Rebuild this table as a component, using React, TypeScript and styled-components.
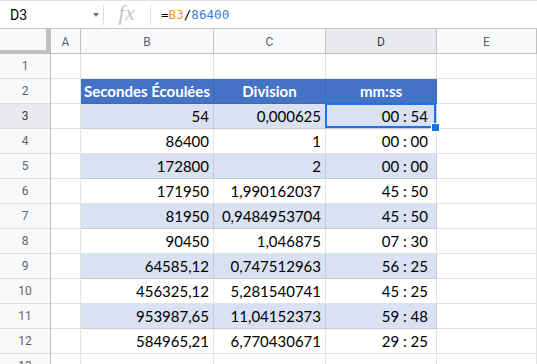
import React from "react";
import styled, { createGlobalStyle, css } from "styled-components";

const GlobalStyle = createGlobalStyle`
  html, body {
    margin: 0;
    padding: 0;
    background: #ffffff;
    overflow: hidden;
  }
`;

type Row = [string, string, string];

const rows: Row[] = [
  ["54", "0,000625", "00 : 54"],
  ["86400", "1", "00 : 00"],
  ["172800", "2", "00 : 00"],
  ["171950", "1,990162037", "45 : 50"],
  ["81950", "0,9484953704", "45 : 50"],
  ["90450", "1,046875", "07 : 30"],
  ["64585,12", "0,747512963", "56 : 25"],
  ["456325,12", "5,281540741", "45 : 25"],
  ["953987,65", "11,04152373", "59 : 48"],
  ["584965,21", "6,770430671", "29 : 25"]
];

const columns = ["A", "B", "C", "D", "E"];

const App: React.FC = () => {
  return (
    <Page>
      <GlobalStyle />
      <FormulaBar>
        <NameBox>
          <span>D3</span>
          <Caret />
        </NameBox>
        <Divider />
        <Fx>fx</Fx>
        <Divider />
        <Formula>
          =<RefText>B3</RefText>/<NumText>86400</NumText>
        </Formula>
      </FormulaBar>
      <Sheet>
        <Corner />
        {columns.map((c) => (
          <ColHeader key={c} $active={c === "D"}>
            {c}
          </ColHeader>
        ))}

        {Array.from({ length: 13 }, (_, i) => {
          const n = i + 1;
          const data = n >= 3 && n <= 12 ? rows[n - 3] : null;
          const band = data !== null && n % 2 === 1;
          return (
            <React.Fragment key={n}>
              <RowHeader $active={n === 3}>{n}</RowHeader>
              <Cell />
              {n === 2 ? (
                <>
                  <HeadCell>Secondes Écoulées</HeadCell>
                  <HeadCell>Division</HeadCell>
                  <HeadCell>mm:ss</HeadCell>
                </>
              ) : data ? (
                <>
                  <Cell $band={band}>{data[0]}</Cell>
                  <Cell $band={band}>{data[1]}</Cell>
                  <TimeCell $band={band} $selected={n === 3}>
                    {data[2]}
                  </TimeCell>
                </>
              ) : (
                <>
                  <Cell />
                  <Cell />
                  <Cell />
                </>
              )}
              <Cell />
            </React.Fragment>
          );
        })}
      </Sheet>
    </Page>
  );
};

const Page = styled.div`
  width: 537px;
  height: 364px;
  overflow: hidden;
  background: #ffffff;
`;

const FormulaBar = styled.div`
  height: 27px;
  display: flex;
  align-items: center;
  border-top: 1px solid #e1e1e1;
  border-bottom: 1px solid #c7c7c7;
  box-sizing: content-box;
  font-family: Roboto, "Liberation Sans", sans-serif;
`;

const NameBox = styled.div`
  width: 103px;
  padding-left: 10px;
  display: flex;
  align-items: center;
  justify-content: space-between;
  box-sizing: border-box;
  font-size: 14px;
  color: #000;
  padding-right: 4px;
`;

const Caret = styled.span`
  width: 0;
  height: 0;
  border-left: 3.5px solid transparent;
  border-right: 3.5px solid transparent;
  border-top: 4px solid #757575;
  margin-top: 1px;
`;

const Divider = styled.div`
  width: 1px;
  height: 20px;
  background: #dadce0;
`;

const Fx = styled.div`
  width: 46px;
  text-align: center;
  font-family: "Liberation Serif", serif;
  font-style: italic;
  font-size: 21px;
  color: #c4c4c4;
  letter-spacing: 1px;
  margin-top: -3px;
`;

const Formula = styled.div`
  padding-left: 10px;
  font-family: "DejaVu Sans Mono", "Liberation Mono", monospace;
  font-size: 12.6px;
  color: #000;
`;

const RefText = styled.span`
  color: #f6971d;
`;

const NumText = styled.span`
  color: #3b7ddd;
`;

const Sheet = styled.div`
  display: grid;
  grid-template-columns: 51px 30px 133px 112px 111px 100px;
  grid-template-rows: 25px;
  grid-auto-rows: 25px;
`;

const headerBase = css`
  background: #f8f9fa;
  font-family: Roboto, "Liberation Sans", sans-serif;
  font-size: 12px;
  color: #5f6368;
  display: flex;
  align-items: center;
  justify-content: center;
  box-sizing: border-box;
`;

const Corner = styled.div`
  background: #f8f9fa;
  border-right: 5px solid #c0c0c0;
  border-bottom: 4px solid #c0c0c0;
  box-sizing: border-box;
`;

const ColHeader = styled.div<{ $active?: boolean }>`
  ${headerBase};
  border-right: 1px solid #c0c0c0;
  border-bottom: 1px solid #c0c0c0;
  padding-top: 2px;
  ${({ $active }) =>
    $active &&
    css`
      background: #e8eaed;
      color: #3c4043;
    `}
`;

const RowHeader = styled.div<{ $active?: boolean }>`
  ${headerBase};
  border-right: 1px solid #c0c0c0;
  border-bottom: 1px solid #e0e0e0;
  ${({ $active }) =>
    $active &&
    css`
      background: #e8eaed;
      color: #3c4043;
    `}
`;

const Cell = styled.div<{ $band?: boolean }>`
  position: relative;
  box-sizing: border-box;
  border-right: 1px solid #e2e3e3;
  border-bottom: 1px solid #e2e3e3;
  font-family: Lato, "Liberation Sans", sans-serif;
  font-size: 15px;
  color: #000;
  display: flex;
  align-items: flex-end;
  justify-content: flex-end;
  padding: 0 4px 3px 0;
  white-space: nowrap;
  ${({ $band }) =>
    $band &&
    css`
      background: #d9e1f2;
      border-right-color: #c3cadc;
      border-bottom-color: #c3cadc;
    `}
`;

const TimeCell = styled(Cell)<{ $selected?: boolean }>`
  padding-right: 8px;
  ${({ $selected }) =>
    $selected &&
    css`
      &::before {
        content: "";
        position: absolute;
        inset: -1px 0 0 -1px;
        border: 2px solid #1a73e8;
      }
      &::after {
        content: "";
        position: absolute;
        right: -4px;
        bottom: -4px;
        width: 7px;
        height: 7px;
        background: #1a73e8;
        border: 1px solid #ffffff;
        z-index: 2;
      }
    `}
`;

const HeadCell = styled.div`
  box-sizing: border-box;
  background: #4472c4;
  border-right: 1px solid #3f6ab8;
  border-bottom: 1px solid #3f6ab8;
  color: #ffffff;
  font-family: Lato, "Liberation Sans", sans-serif;
  font-weight: 700;
  font-size: 15px;
  display: flex;
  align-items: flex-end;
  justify-content: center;
  padding-bottom: 3px;
  white-space: nowrap;
`;

export default App;
